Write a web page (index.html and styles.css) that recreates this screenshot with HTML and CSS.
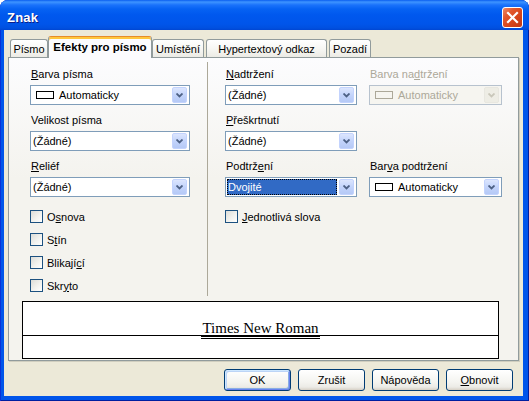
FILE: index.html
```html
<!DOCTYPE html>
<html lang="cs">
<head>
<meta charset="utf-8">
<title>Znak</title>
<link rel="stylesheet" href="styles.css">
</head>
<body>
<div class="window">
  <div class="titlebar">
    <span class="title">Znak</span>
    <div class="close">
      <svg width="13" height="13" viewBox="0 0 13 13"><path d="M2 2 L11 11 M11 2 L2 11" stroke="#fff" stroke-width="2.2" stroke-linecap="square"/></svg>
    </div>
  </div>
  <div class="client">
    <div class="tabs">
      <div class="tab w-pismo">Písmo</div>
      <div class="tab active w-efekty">Efekty pro písmo</div>
      <div class="tab w-umisteni">Umístění</div>
      <div class="tab w-odkaz spaced">Hypertextový odkaz</div>
      <div class="tab w-pozadi spaced">Pozadí</div>
    </div>
    <div class="panel">
      <div class="fields">
        <div class="col col-left">
          <div class="field">
            <div class="label"><u>B</u>arva písma</div>
            <div class="combo"><span class="swatch"></span><span class="val">Automaticky</span><span class="btn"><svg width="7" height="5" viewBox="0 0 7 5"><path d="M0.5 0.5 L3.5 3.5 L6.5 0.5" fill="none" stroke="#4D6185" stroke-width="1.8"/></svg></span></div>
          </div>
          <div class="field">
            <div class="label">Velikost písma</div>
            <div class="combo"><span class="val">(Žádné)</span><span class="btn"><svg width="7" height="5" viewBox="0 0 7 5"><path d="M0.5 0.5 L3.5 3.5 L6.5 0.5" fill="none" stroke="#4D6185" stroke-width="1.8"/></svg></span></div>
          </div>
          <div class="field">
            <div class="label"><u>R</u>eliéf</div>
            <div class="combo"><span class="val">(Žádné)</span><span class="btn"><svg width="7" height="5" viewBox="0 0 7 5"><path d="M0.5 0.5 L3.5 3.5 L6.5 0.5" fill="none" stroke="#4D6185" stroke-width="1.8"/></svg></span></div>
          </div>
          <div class="checks">
            <div class="check"><span class="box"></span><span>O<u>s</u>nova</span></div>
            <div class="check"><span class="box"></span><span>S<u>t</u>ín</span></div>
            <div class="check"><span class="box"></span><span>Blikají<u>c</u>í</span></div>
            <div class="check"><span class="box"></span><span>Skr<u>y</u>to</span></div>
          </div>
        </div>
        <div class="divider"></div>
        <div class="col col-right">
          <div class="pair">
            <div class="field">
              <div class="label"><u>N</u>adtržení</div>
              <div class="combo"><span class="val">(Žádné)</span><span class="btn"><svg width="7" height="5" viewBox="0 0 7 5"><path d="M0.5 0.5 L3.5 3.5 L6.5 0.5" fill="none" stroke="#4D6185" stroke-width="1.8"/></svg></span></div>
            </div>
            <div class="field disabled">
              <div class="label">Barva na<u>d</u>tržení</div>
              <div class="combo"><span class="swatch"></span><span class="val">Automaticky</span><span class="btn"><svg width="7" height="5" viewBox="0 0 7 5"><path d="M0.5 0.5 L3.5 3.5 L6.5 0.5" fill="none" stroke="#C9C7BA" stroke-width="1.8"/></svg></span></div>
            </div>
          </div>
          <div class="pair">
            <div class="field">
              <div class="label"><u>P</u>řeškrtnutí</div>
              <div class="combo"><span class="val">(Žádné)</span><span class="btn"><svg width="7" height="5" viewBox="0 0 7 5"><path d="M0.5 0.5 L3.5 3.5 L6.5 0.5" fill="none" stroke="#4D6185" stroke-width="1.8"/></svg></span></div>
            </div>
          </div>
          <div class="pair">
            <div class="field">
              <div class="label">Podtrž<u>e</u>ní</div>
              <div class="combo"><span class="val sel">Dvojité</span><span class="btn"><svg width="7" height="5" viewBox="0 0 7 5"><path d="M0.5 0.5 L3.5 3.5 L6.5 0.5" fill="none" stroke="#4D6185" stroke-width="1.8"/></svg></span></div>
            </div>
            <div class="field">
              <div class="label">Bar<u>v</u>a podtržení</div>
              <div class="combo"><span class="swatch"></span><span class="val">Automaticky</span><span class="btn"><svg width="7" height="5" viewBox="0 0 7 5"><path d="M0.5 0.5 L3.5 3.5 L6.5 0.5" fill="none" stroke="#4D6185" stroke-width="1.8"/></svg></span></div>
            </div>
          </div>
          <div class="checks">
            <div class="check"><span class="box"></span><span><u>J</u>ednotlivá slova</span></div>
          </div>
        </div>
      </div>
      <div class="preview">
        <div class="preview-top"><span class="sample">Times New Roman</span></div>
        <div class="preview-bottom"></div>
      </div>
    </div>
    <div class="buttons">
      <div class="button default">OK</div>
      <div class="button">Zrušit</div>
      <div class="button">Nápověda</div>
      <div class="button"><span><u>O</u>bnovit</span></div>
    </div>
  </div>
</div>
</body>
</html>
```

FILE: styles.css
```css
* { box-sizing: border-box; }
html, body { margin: 0; padding: 0; background: #fff; }
body {
  font-family: "Liberation Sans", Arial, sans-serif;
  font-size: 11px;
  color: #000;
}
u { text-decoration: underline; text-underline-offset: 1px; }

.window {
  width: 529px;
  height: 401px;
  display: flex;
  flex-direction: column;
  background: #0055EA;
  border-radius: 8px 8px 0 0;
  overflow: hidden;
  box-shadow: inset 1px 0 0 #0831D9, inset -1px 0 0 #001EA0, inset 0 -1px 0 #001EA0;
}

.titlebar {
  height: 30px;
  flex: none;
  display: flex;
  align-items: center;
  justify-content: space-between;
  padding: 5px 6px 0 7px;
  background: linear-gradient(to bottom, #0A5EF0 0px, #3E94FF 2px, #1A72FB 5px, #0662F3 9px, #0058EE 15px, #0055EA 24px, #0050E0 28px, #0046D2 30px);
}
.title {
  color: #fff;
  font-weight: bold;
  font-size: 13px;
  text-shadow: 1px 1px 0 #0A1E8A;
  letter-spacing: 0.2px;
}
.close {
  width: 21px;
  height: 21px;
  border: 1px solid #fff;
  border-radius: 3px;
  background: linear-gradient(135deg, #EE8A68 0%, #E2582E 30%, #D6451C 60%, #C03815 100%);
  display: flex;
  align-items: center;
  justify-content: center;
}

.client {
  flex: 1;
  margin: 0 6px 5px 4px;
  background: #ECE9D8;
  padding: 6px 4px 5px 4px;
  display: flex;
  flex-direction: column;
}

.tabs {
  height: 21px;
  display: flex;
  align-items: flex-end;
  padding-left: 2px;
  position: relative;
  z-index: 1;
}
.tab {
  height: 18px;
  flex: none;
  border: 1px solid #919B9C;
  border-bottom: none;
  border-radius: 3px 3px 0 0;
  background: linear-gradient(to bottom, #FFFFFF 0%, #F7F7F4 50%, #ECEBE5 100%);
  display: flex;
  align-items: center;
  justify-content: center;
  white-space: nowrap;
  padding-top: 1px;
}
.tab.active {
  height: 22px;
  margin-bottom: -1px;
  background: #FCFCFE;
  border-top: 1px solid #E68B2C;
  box-shadow: inset 0 2px 0 #FFC73C;
  font-weight: bold;
  font-size: 11.5px;
  padding-top: 1px;
  padding-bottom: 2px;
}
.w-pismo { width: 38px; }
.w-efekty { width: 104px; }
.w-umisteni { width: 52px; }
.w-odkaz { width: 121px; }
.w-pozadi { width: 42px; }
.spaced { margin-left: 2px; }

.panel {
  height: 304px;
  flex: none;
  border: 1px solid #919B9C;
  background: linear-gradient(to bottom, #FCFCFE 0%, #F4F3EE 40%, #F4F3EE 100%);
  padding: 4px 0 0 0;
  box-shadow: 1px 1px 0 #D0CEBF;
}

.fields {
  display: flex;
  padding-left: 21px;
  height: 234px;
}
.col { padding-top: 6px; }
.col-left { width: 160px; }
.divider {
  width: 1px;
  margin: 0 17px;
  background: #ACA899;
}
.col-right { width: 277px; }

.field { margin-bottom: 9px; }
.label {
  height: 13px;
  line-height: 13px;
  margin-bottom: 4px;
  padding-left: 1px;
  white-space: nowrap;
}
.combo {
  height: 20px;
  border: 1px solid #7F9DB9;
  background: #fff;
  display: flex;
  align-items: center;
  padding: 1px 2px 1px 1px;
}
.combo .val {
  flex: 1;
  padding-left: 1px;
  white-space: nowrap;
  line-height: 16px;
  height: 16px;
}
.combo .val.sel {
  background: #316AC5;
  color: #fff;
  outline: 1px dotted #000;
  outline-offset: -1px;
  margin-right: 2px;
  padding-left: 1px;
}
.swatch {
  width: 18px;
  height: 8px;
  border: 1px solid #000;
  margin: 0 4px 0 4px;
  flex: none;
}
.btn {
  width: 15px;
  height: 16px;
  flex: none;
  border: 1px solid #C3D3FD;
  border-radius: 2px;
  background: linear-gradient(to bottom, #DCE6FE 0%, #C3D4FB 50%, #B5C9F6 100%);
  display: flex;
  align-items: center;
  justify-content: center;
}

.pair {
  display: grid;
  grid-template-columns: 132px 133px;
  column-gap: 12px;
}

.disabled .label { color: #ACA899; }
.disabled .combo {
  border-color: #B7C2CE;
  background: #F6F5F0;
  color: #ACA899;
}
.disabled .swatch { border-color: #ACA899; }
.disabled .btn {
  border-color: #E8E7E0;
  background: #EEEDE5;
}

.checks {
  margin-top: 13px;
  display: flex;
  flex-direction: column;
  gap: 10px;
}
.col-right .checks { margin-top: 4px; }
.check {
  height: 13px;
  display: flex;
  align-items: center;
  white-space: nowrap;
}
.box {
  width: 13px;
  height: 13px;
  flex: none;
  border: 1px solid #1C5180;
  background: linear-gradient(135deg, #DCDCD7 0%, #F2F2EE 55%, #FFFFFF 100%);
  margin-right: 4px;
}

.preview {
  margin: 5px 19px 0 13px;
  height: 58px;
  border: 1px solid #000;
  background: #fff;
  display: flex;
  flex-direction: column;
}
.preview-top {
  height: 34px;
  border-bottom: 1px solid #000;
  display: flex;
  justify-content: center;
  align-items: flex-end;
}
.sample {
  font-family: "Liberation Serif", "Times New Roman", serif;
  font-size: 15px;
  line-height: 15px;
  border-bottom: 3px double #000;
  margin-bottom: -4px;
  padding: 0 1px;
  position: relative;
}
.preview-bottom { flex: 1; }

.buttons {
  margin-top: 8px;
  display: flex;
  justify-content: flex-end;
  gap: 7px;
  padding-right: 6px;
}
.button {
  width: 67px;
  height: 22px;
  border: 1px solid #003C74;
  border-radius: 3px;
  background: linear-gradient(to bottom, #FFFFFF 0%, #F4F4F0 60%, #ECEBE6 85%, #D6D0C5 100%);
  display: flex;
  align-items: center;
  justify-content: center;
  white-space: nowrap;
}
.button.default {
  box-shadow: inset 1px 1px 0 #CEE7FF, inset -1px -1px 0 #6982EE, inset 2px 2px 0 #BCD4F6, inset -2px -2px 0 #89ADE4;
}
```
